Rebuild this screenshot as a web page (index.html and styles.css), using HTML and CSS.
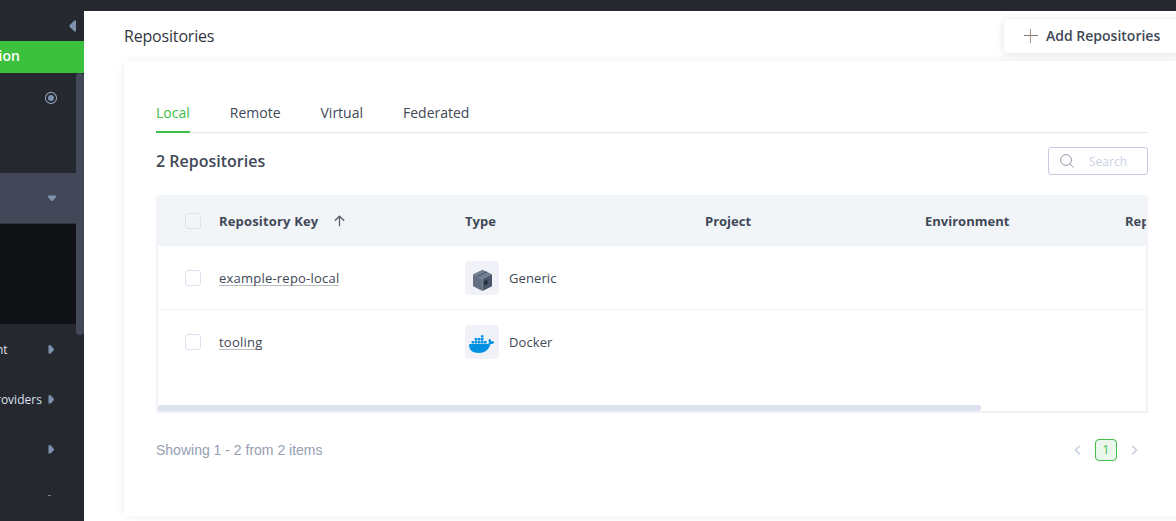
FILE: index.html
```html
<!DOCTYPE html>
<html lang="en">
<head>
<meta charset="utf-8">
<title>Repositories</title>
<link rel="stylesheet" href="styles.css">
</head>
<body>
<div class="topbar"></div>
<div class="shell">
  <aside class="sidebar">
    <div class="collapse"><svg width="7" height="12" viewBox="0 0 7 12"><path d="M7 0.5v11H5.4L0.8 7Q0 6 0.8 5L5.4 0.5z"/></svg></div>
    <div class="section">ion</div>
    <div class="nav-wrap">
      <nav class="nav">
        <div class="nav-item"><svg class="target" width="14" height="14" viewBox="0 0 14 14"><circle class="ring" cx="7" cy="7" r="5.6"/><circle cx="7" cy="7" r="3"/></svg></div>
        <div class="nav-item"></div>
        <div class="nav-item active"><svg width="10" height="7" viewBox="0 0 10 7"><path d="M1.8 0.5h6.4Q9.5 0.7 9 2L5.8 5.8Q5 6.7 4.2 5.8L1 2Q0.5 0.7 1.8 0.5z"/></svg></div>
        <div class="submenu"></div>
        <div class="nav-item"><span class="nav-label">nt</span><svg class="arrow" width="7" height="9" viewBox="0 0 7 9"><path d="M0.5 0.3h2.2L5.7 3.7Q6.4 4.5 5.7 5.3L2.7 8.5H0.5z"/></svg></div>
        <div class="nav-item"><span class="nav-label">roviders</span><svg class="arrow" width="7" height="9" viewBox="0 0 7 9"><path d="M0.5 0.3h2.2L5.7 3.7Q6.4 4.5 5.7 5.3L2.7 8.5H0.5z"/></svg></div>
        <div class="nav-item"><svg class="arrow" width="7" height="9" viewBox="0 0 7 9"><path d="M0.5 0.3h2.2L5.7 3.7Q6.4 4.5 5.7 5.3L2.7 8.5H0.5z"/></svg></div>
        <div class="nav-item"><i class="sliver"></i></div>
      </nav>
      <div class="track"><div class="thumb"></div></div>
    </div>
  </aside>
  <main class="main">
    <header class="head">
      <h1>Repositories</h1>
      <button class="add"><svg width="14" height="14" viewBox="0 0 14 14"><path class="plus-h" d="M0 6.5h14"/><path class="plus-v" d="M6.5 0v14"/></svg>Add Repositories</button>
    </header>
    <section class="card">
      <div class="tabs">
        <a class="tab on">Local</a><a class="tab">Remote</a><a class="tab">Virtual</a><a class="tab">Federated</a>
      </div>
      <div class="toolbar">
        <h2>2 Repositories</h2>
        <div class="search"><svg width="14" height="14" viewBox="0 0 14 14"><circle cx="6" cy="6" r="5.4"/><path d="M9.9 9.9l3.7 3.7"/></svg><span>Search</span></div>
      </div>
      <div class="table">
        <div class="row header">
          <i class="check"></i><span class="key">Repository Key<svg width="11" height="12" viewBox="0 0 11 12"><path d="M5.5 11.2V1.2M0.8 5.8L5.5 1.2L10.2 5.8"/></svg></span><span class="type">Type</span><span class="project">Project</span><span class="env">Environment</span><span>Rep</span>
        </div>
        <div class="row">
          <i class="check"></i><span class="key"><a class="link">example-repo-local</a></span>
          <span class="type"><span class="tile"><svg width="34" height="34" viewBox="0 0 34 34"><path fill="#748091" d="M17.5 8.7L27 13.2L17.5 18L8 13.2z"/><path fill="#647083" d="M8 13.2L17.5 18V30L8 25.3z"/><path fill="#4b586b" d="M27 13.2L17.5 18V30L27 25.3z"/><path fill="none" stroke="#445063" d="M12.4 15.4L22 10.8"/><path fill="#303a49" d="M19 20.2l3.7-1.6v4.5L19 24.8z"/><path fill="#151b25" d="M20.3 20.6h1.5v2h-1.5z"/></svg></span>Generic</span>
        </div>
        <div class="row last">
          <i class="check"></i><span class="key"><a class="link">tooling</a></span>
          <span class="type"><span class="tile"><svg width="34" height="34" viewBox="0 0 34 34" fill="#0091e2"><path d="M4.2 19H22.2C23.4 18.8 24 18.4 24.3 18C23.2 16.6 23.3 15 24.5 13.7C25.7 14.5 26.2 15.4 26.2 16.4C27.3 16.1 28.6 16.4 29.4 17C28.7 18.6 27.2 19.2 25.5 19C23.8 24.5 20.5 28 14 28C7.2 28 3.7 25.2 4.2 19z"/><path d="M6.6 16h2.6v2.4H6.6zM9.7 16h2.6v2.4H9.7zM12.8 16h2.6v2.4h-2.6zM15.9 16h2.6v2.4h-2.6zM19 16h2.6v2.4H19zM9.7 13.1h2.6v2.4H9.7zM12.8 13.1h2.6v2.4h-2.6zM15.9 13.1h2.6v2.4h-2.6zM15.9 10.2h2.6v2.4h-2.6z"/></svg></span>Docker</span>
        </div>
        <div class="hscroll"></div>
      </div>
      <footer class="footer">
        <span>Showing 1 - 2 from 2 items</span>
        <div class="pager"><svg width="7" height="10" viewBox="0 0 7 10"><path d="M5.8 0.8L1.5 5L5.8 9.2"/></svg><b class="page">1</b><svg width="7" height="10" viewBox="0 0 7 10"><path d="M1.2 0.8L5.5 5L1.2 9.2"/></svg></div>
      </footer>
    </section>
  </main>
</div>
</body>
</html>
```
FILE: styles.css
```css
* { box-sizing: border-box; }
body {
  margin: 0;
  width: 1176px;
  height: 521px;
  overflow: hidden;
  font: 14px/20px "Open Sans", sans-serif;
  color: #414857;
  background: #fff;
}
svg { display: block; flex: none; }
h1, h2 { margin: 0; font-weight: 400; }
.topbar { height: 11px; background: #25272f; }
.shell { display: flex; height: 510px; }

.sidebar { width: 84px; flex: none; background: #25282f; overflow: hidden; }
.sidebar svg { fill: #7c92ae; }
.collapse { height: 30px; padding: 9px 0 0 69px; }
.section {
  height: 32px;
  line-height: 30px;
  text-indent: -1.5px;
  background: #3bc13e;
  color: #fff;
  font-weight: 600;
}
.nav-wrap { display: flex; }
.nav { width: 76px; }
.nav-item { height: 50px; display: flex; align-items: center; white-space: nowrap; }
.nav-item.active { height: 51px; padding-left: 47px; background: #424857; border-bottom: 1px solid #30343e; }
.target { margin-left: 44px; }
.sidebar .ring { fill: none; stroke: #8b9bb0; stroke-width: 1.1; }
.submenu { height: 100px; background: #111216; }
.nav-label { width: 48px; margin-right: -48px; padding-top: 1px; text-indent: -4px; font-size: 12px; color: #dbe1ed; }
.arrow { margin-left: 48px; }
.sliver { width: 3px; height: 1px; margin: -8px 0 0 48px; background: #6e87a5; }
.track { width: 8px; }
.thumb { height: 262px; border-radius: 4px; background: #424857; }

.main { flex: 1; min-width: 0; padding-left: 40px; overflow: hidden; background: #fff; }
.head { height: 50px; display: flex; justify-content: space-between; align-items: flex-start; }
h1 { font-size: 16px; line-height: 24px; margin-top: 13px; letter-spacing: -.18px; color: #33363e; }
.add {
  display: flex;
  align-items: center;
  gap: 8px;
  width: 180px;
  height: 34px;
  margin: 8px -8px 0 0;
  padding: 0 0 0 20px;
  border: 0;
  border-radius: 4px;
  background: #fff;
  box-shadow: 0 1px 8px rgba(0, 0, 0, .12);
  font: 600 14px/20px "Open Sans", sans-serif;
  color: #414857;
  white-space: nowrap;
}
.plus-h { stroke: #777b83; }
.plus-v { stroke: #a48e78; }
.card {
  width: 1060px;
  height: 455px;
  padding: 32px 40px 0 32px;
  border-radius: 4px;
  box-shadow: 0 0 10px rgba(0, 0, 0, .07);
}
.tabs { width: 992px; height: 40px; display: flex; gap: 40px; border-bottom: 1px solid #e4e5ee; }
.tab { height: 40px; padding-top: 10px; }
.tab.on { color: #40be46; border-bottom: 2px solid #40be46; }
.toolbar { width: 992px; height: 62px; padding-top: 14px; display: flex; justify-content: space-between; }
h2 { font-size: 16px; line-height: 28px; font-weight: 600; }
.search {
  display: flex;
  align-items: center;
  gap: 15px;
  width: 100px;
  height: 28px;
  padding-left: 11px;
  border: 1px solid #c5cbe0;
  border-radius: 3px;
  font-size: 12px;
  color: #ccd2e5;
}
.search span { padding-top: 1px; }
.search svg { fill: none; stroke: #939bae; }

.table {
  width: 992px;
  height: 218px;
  border: 2px solid #f1f2f8;
  border-top-width: 1px;
  border-radius: 5px 5px 0 0;
  overflow: hidden;
}
.row { height: 64px; padding-left: 27px; display: flex; align-items: center; border-bottom: 1px solid #f1f2f6; white-space: nowrap; font-size: 13px; }
.row.last { border-color: transparent; }
.header { height: 50px; background: #f1f5f8; border: 0; font-weight: 700; }
.check { width: 16px; height: 16px; margin-right: 18px; border: 1px solid #dde0ed; border-radius: 3px; flex: none; }
.key { width: 246px; flex: none; display: flex; align-items: center; letter-spacing: .17px; }
.key svg { margin-left: 15.5px; fill: none; stroke: #565c69; stroke-width: 1.25; }
.type { width: 240px; flex: none; display: flex; align-items: center; }
.row:not(.header) .type { letter-spacing: .1px; }
.project { width: 220px; flex: none; }
.env { width: 200px; flex: none; }
.link { height: 16px; line-height: 17px; letter-spacing: .22px; box-shadow: 0 -1px #b9bbc0 inset; }
.tile { width: 34px; height: 34px; margin-right: 10px; border-radius: 5px; background: #f1f2f8; }
.hscroll { width: 823px; height: 6px; margin-top: 31px; border-radius: 3px; background: #dde0ed; }
.footer {
  width: 992px;
  height: 74px;
  display: flex;
  align-items: center;
  justify-content: space-between;
  font: 14px/20px "Liberation Sans", sans-serif;
  color: #979eb3;
}
.pager { display: flex; align-items: center; padding-right: 10px; }
.pager svg { fill: none; stroke: #c7cee2; stroke-width: 1.5; }
.page {
  width: 22px;
  height: 22px;
  margin: 0 14px;
  border: 1px solid #40be46;
  border-radius: 4px;
  background: #ebf6ed;
  color: #40be46;
  font: 12px/20px "Open Sans", sans-serif;
  text-align: center;
}
```
